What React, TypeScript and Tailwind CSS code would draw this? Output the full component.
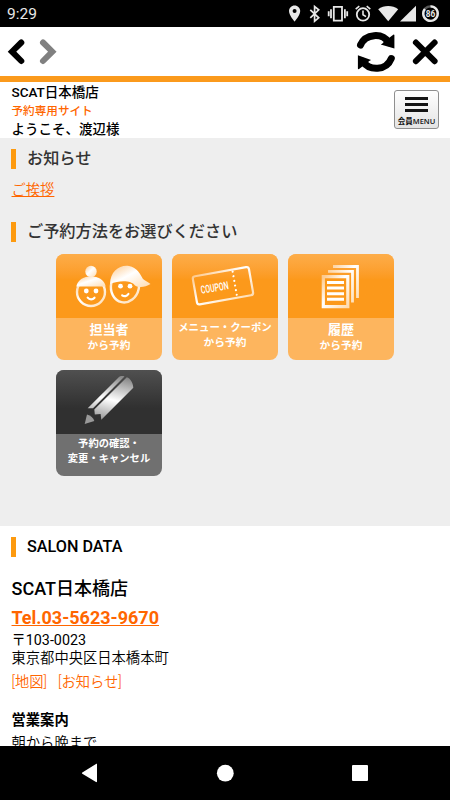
import type { ReactNode } from 'react';

function StatusBar() {
  return (
    <div className="h-[27px] bg-black flex items-center justify-between pl-[7px] text-[#e8e8e8]">
      <span className="text-[15.500px] leading-[27px] pt-px">9:29</span>
      <svg className="w-[170px] h-[27px]" viewBox="280 0 170 27" fill="none" stroke="#e8e8e8">
        {/* location */}
        <path fill="#e8e8e8" stroke="none" fillRule="evenodd" d="M294.6 5.5c-3.2 0-5.6 2.5-5.6 5.6 0 4.200 5.600 10.600 5.600 10.600s5.600-6.400 5.600-10.600c0-3.100-2.400-5.600-5.600-5.600zm0 7.600a2 2 0 110-4 2 2 0 010 4z" />
        {/* bluetooth */}
        <path strokeWidth="1.700" d="M310.300 9.800l8.400 8-4.100 3.300V6.500l4.100 3.300-8.400 8" />
        {/* vibrate */}
        <path strokeWidth="1.800" d="M333.800 6.800h8.200v13.800h-8.200zM331 9.200v9M328.700 11.200v5M344.900 9.200v9M347.200 11.200v5" />
        {/* alarm */}
        <circle cx="363" cy="14.400" r="6.200" strokeWidth="1.800" />
        <path strokeWidth="1.600" d="M363 10.500v4.300l3 1.800M355.700 9.200l3.600-3M370.300 9.200l-3.600-3" />
        {/* wifi and signal */}
        <path fill="#e8e8e8" stroke="none" d="M378.200 9.200c5.700-4.400 14.300-4.400 20 0L388.200 21.300z" />
        <path fill="#e8e8e8" stroke="none" d="M416 5.800v15.800h-16z" />
        {/* battery */}
        <circle cx="430.500" cy="13.600" r="7.300" strokeWidth="2.300" stroke="#555" />
        <path strokeWidth="2.300" d="M430.500 6.300a7.300 7.300 0 11-5.600 2.600" />
        <text x="430.500" y="17" fill="#e8e8e8" stroke="none" fontSize="9.500" fontWeight="700" textAnchor="middle" textLength="9.500" lengthAdjust="spacingAndGlyphs">86</text>
      </svg>
    </div>
  );
}

function BrowserBar() {
  return (
    <div className="h-[55px] bg-white border-b-[6px] border-[#fb9a1c] flex justify-between">
      <svg className="w-[64px] h-[49px]" viewBox="0 27 64 49" fill="none" strokeWidth="6" strokeLinecap="round">
        <path stroke="#000" d="M21.300 42.500L12 51.700l9.300 9.300" />
        <path stroke="#808080" d="M43 42.500l9.300 9.200-9.300 9.300" />
      </svg>
      <svg className="w-[100px] h-[49px]" viewBox="350 27 100 49" fill="none" stroke="#000">
        <path strokeWidth="7" strokeLinecap="round" d="M360.500 45c5-11.500 22-12.500 28-2.500M391.300 58.500c-5 12.500-22 12.500-28.300 3" />
        <path fill="#000" stroke="none" d="M393.600 34.500c.6 0 .8.300.8.800v13.300L380.700 44.500c1.500-.6 2.200-1.500 3-2.500zM358.700 69.300c-.6 0-.8-.3-.8-.8V55.200l13.200 4.700c-1.500.7-2.300 1.300-3 2.300z" />
        <path strokeWidth="6" strokeLinecap="round" d="M415.900 42.500l18.700 18.700M434.600 42.500l-18.700 18.700" />
      </svg>
    </div>
  );
}

function SectionTitle({ children, className = '' }: { children: ReactNode; className?: string }) {
  return (
    <h2 className={`flex items-center gap-[11px] h-5 text-[16.2px] leading-5 font-medium ${className}`}>
      <span className="w-[5px] h-5 bg-[#fd9a0f] shrink-0" />
      <span className="whitespace-nowrap">{children}</span>
    </h2>
  );
}

type TileProps = {
  icon: ReactNode;
  title: string;
  sub: string;
  titleClass?: string;
  subClass?: string;
  dark?: boolean;
};

function Tile({
  icon,
  title,
  sub,
  titleClass = 'text-[13px] leading-4 pt-1',
  subClass = 'text-[10.700px]',
  dark = false,
}: TileProps) {
  return (
    <button
      className={`w-[106px] h-[106px] rounded-[8px] overflow-hidden flex flex-col text-white font-bold ${
        dark ? 'bg-[#707070]' : 'bg-[#fdb55e]'
      }`}
    >
      <svg
        className={`w-full h-16 shrink-0 bg-linear-to-b ${
          dark ? 'from-[#505050] to-[#303030] to-60%' : 'from-[#fdad49] to-[#fc991b] to-40%'
        }`}
        viewBox="0 0 106 64"
        fill="none"
      >
        <defs>
          <linearGradient id="shine" x1="0" y1="0" x2="1" y2="1">
            <stop offset="0" stopColor="#fdc98c" />
            <stop offset=".45" stopColor="#fff" />
            <stop offset="1" stopColor="#fedcb1" />
          </linearGradient>
          <linearGradient id="silver" gradientUnits="userSpaceOnUse" x1="62" y1="6" x2="50" y2="54">
            <stop offset="0" stopColor="#888" />
            <stop offset=".5" stopColor="#fff" />
            <stop offset="1" stopColor="#888" />
          </linearGradient>
        </defs>
        {icon}
      </svg>
      <span className={`w-full text-center whitespace-nowrap ${titleClass}`}>{title}</span>
      <span className={`w-full text-center whitespace-nowrap leading-[15px] ${subClass}`}>{sub}</span>
    </button>
  );
}

function StaffIcon() {
  return (
    <>
      <circle cx="35" cy="17.500" r="5.700" fill="url(#shine)" />
      <circle cx="35" cy="38" r="14" stroke="url(#shine)" strokeWidth="2.400" />
      <path fill="url(#shine)" d="M20.300 32.500C23 18.800 47 18.800 49.700 32.500z" />
      <circle cx="30.300" cy="37" r="2.400" fill="#fff" />
      <circle cx="40" cy="37" r="2.400" fill="#fff" />
      <path stroke="#fff" strokeWidth="2.200" strokeLinecap="round" d="M31.700 43.700c1.700 2.200 5 2.200 6.800 0" />
      <ellipse cx="69" cy="32" rx="14" ry="16.500" transform="rotate(12 69 32)" stroke="url(#shine)" strokeWidth="2.400" />
      <path fill="url(#shine)" d="M54.200 30C54 17 64 10.500 73 12c8 1.400 11.500 8.500 14 13 2 2 5.500 3 7.500 5-5 3-11 4.300-15.500 1.500-3.500-5-15-5.500-24.800-1.500z" />
      <circle cx="64.500" cy="32.200" r="2.400" fill="#fff" />
      <circle cx="74" cy="32.200" r="2.400" fill="#fff" />
      <path stroke="#fff" strokeWidth="2.200" strokeLinecap="round" d="M66.200 41.300c2 1.600 4.700 1 6.200-1.300" />
    </>
  );
}

function CouponIcon() {
  return (
    <g transform="rotate(-10 51 32)">
      <rect x="22.500" y="17.500" width="57" height="28.500" rx="2.500" stroke="url(#shine)" strokeWidth="2.200" />
      <path stroke="#fff" strokeWidth="2.200" strokeLinecap="round" strokeDasharray="0 4.700" d="M63 19.500v25" />
      <text x="28.500" y="36" fill="#fff" fontSize="11" fontWeight="500" textLength="28" lengthAdjust="spacingAndGlyphs">COUPON</text>
    </g>
  );
}

function HistoryIcon() {
  return (
    <>
      <path stroke="url(#shine)" strokeWidth="2.800" d="M45 12.500h24.500v31.500M40 17.400h24.500v31" />
      <path stroke="url(#shine)" strokeWidth="3.200" d="M35.300 22.600h24.500v30H35.300z" />
      <path stroke="#fff" strokeWidth="3" d="M39 28.500h17M39 34h17M39 39.700h17M39 45.200h17" />
    </>
  );
}

function PencilIcon() {
  return (
    <>
      <path fill="url(#silver)" d="M62.500 7.500c1.500-1.500 4-1.800 6-1L37 38.300h-5.300z" />
      <path fill="url(#silver)" d="M70.800 7.300c3.500 1 6.200 5.500 6.500 10.400L45.300 49.700l-.7-5.700-5.800.5-.5-5z" />
      <path fill="#999" d="M31 44.500c3.700 1 6.500 3.500 7.300 6.500l-9.600 3z" />
    </>
  );
}

export default function App() {
  return (
    <div className="w-[450px] h-[800px] overflow-hidden flex flex-col bg-white text-black font-[Roboto,'Noto_Sans_CJK_JP',sans-serif]">
      <StatusBar />
      <BrowserBar />

      {/* Salon header */}
      <header className="h-14 shrink-0 flex items-start justify-between pl-[11.500px] pr-[11px] whitespace-nowrap">
        <div className="font-medium">
          <h1 className="text-[13.500px] leading-[21px]">SCAT日本橋店</h1>
          <p className="text-[11.600px] leading-[17px] text-[#ff6600]">予約専用サイト</p>
          <p className="text-[13.500px] leading-[19px]">ようこそ、渡辺様</p>
        </div>
        <button className="mt-[8px] w-[45px] h-[39px] rounded-[3px] border border-[#8f8f8f] bg-linear-to-b from-white to-[#e4e4e4] flex flex-col items-center pt-[6px]">
          <span className="flex flex-col gap-[3px]">
            <span className="w-[23px] h-[3px] bg-[#151515]" />
            <span className="w-[23px] h-[3px] bg-[#151515]" />
            <span className="w-[23px] h-[3px] bg-[#151515]" />
          </span>
          <span className="mt-[3px] text-[7.500px] leading-[12px] font-semibold font-['Open_Sans','Noto_Sans_CJK_JP',sans-serif] text-[#111]">会員MENU</span>
        </button>
      </header>

      {/* Reservation */}
      <main className="h-[388px] shrink-0 bg-[#eeeeee] pl-[11px] pt-[11px] text-[#333]">
        <SectionTitle>お知らせ</SectionTitle>
        <a className="mt-[11px] ml-[0.5px] block w-fit text-[14.300px] leading-5 font-[350] text-[#ff6600] underline">ご挨拶</a>
        <SectionTitle className="mt-[22px]">ご予約方法をお選びください</SectionTitle>
        <div className="mt-[12px] ml-[45px] grid grid-cols-[repeat(3,106px)] gap-[10px]">
          <Tile icon={<StaffIcon />} title="担当者" sub="から予約" />
          <Tile icon={<CouponIcon />} title="メニュー・クーポン" sub="から予約" titleClass="text-[10.400px] leading-[14px] pt-[3px]" />
          <Tile icon={<HistoryIcon />} title="履歴" sub="から予約" />
          <Tile
            dark
            icon={<PencilIcon />}
            title="予約の確認・"
            sub="変更・キャンセル"
            titleClass="text-[10.300px] leading-[14px] pt-[3px]"
            subClass="text-[10.300px]"
          />
        </div>
      </main>

      {/* Salon data */}
      <section className="h-[220px] shrink-0 overflow-hidden pl-[11px] pt-[11px] text-[14.300px]">
        <SectionTitle>SALON DATA</SectionTitle>
        <div className="pl-[0.5px]">
          <h3 className="mt-[18px] text-[18px] leading-7 font-medium">SCAT日本橋店</h3>
          <a className="mt-[3px] block w-fit text-[18px] leading-6 font-bold text-[#ff6600] underline">Tel.03-5623-9670</a>
          <p className="mt-[1px] leading-[18px]">〒103-0023</p>
          <p className="leading-[18px] font-[350]">東京都中央区日本橋本町</p>
          <p className="mt-[5px] flex gap-[11px] leading-5 font-[350] text-[#ff6600]">
            <a>[地図]</a>
            <a>[お知らせ]</a>
          </p>
          <h4 className="mt-[18px] leading-5 font-bold">営業案内</h4>
          <p className="mt-[3px] leading-5 font-[350]">朝から晩まで</p>
        </div>
      </section>

      {/* Android navigation */}
      <nav className="h-[54px] shrink-0 bg-black">
        <svg className="w-full h-full" viewBox="0 746 450 54" fill="#fff">
          <path d="M97 764.300v17.200c0 .6-.5.900-1 .600l-13.700-8.300c-.5-.3-.5-1 0-1.300l13.700-8.500c.5-.3 1-.1 1 .3z" />
          <circle cx="225.300" cy="773.200" r="8.400" />
          <rect x="352" y="765" width="16" height="16" rx="1" />
        </svg>
      </nav>
    </div>
  );
}
